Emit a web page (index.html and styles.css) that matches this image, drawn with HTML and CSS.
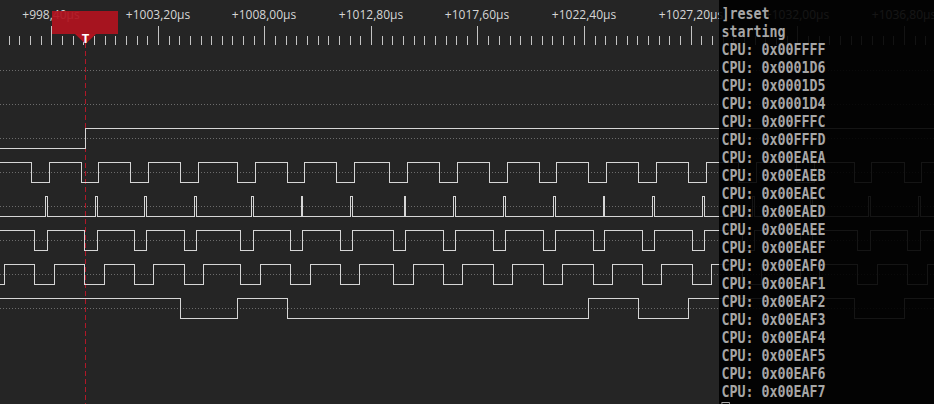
FILE: index.html
```html
<!DOCTYPE html>
<html>
<head>
<meta charset="utf-8">
<link rel="stylesheet" href="styles.css">
</head>
<body>
<div class="app">
  <div class="view">
    <svg class="ruler" width="934" height="46" viewBox="0 0 934 46">
      <g class="labels">
        <text x="51" y="19">+998,40µs</text>
        <text x="158" y="19">+1003,20µs</text>
        <text x="264" y="19">+1008,00µs</text>
        <text x="371" y="19">+1012,80µs</text>
        <text x="477" y="19">+1017,60µs</text>
        <text x="584" y="19">+1022,40µs</text>
        <text x="691" y="19">+1027,20µs</text>
        <text x="797" y="19">+1032,00µs</text>
        <text x="904" y="19">+1036,80µs</text>
      </g>
      <path class="ticks" d="M9.5 36V45M19.5 36V45M30.5 36V45M41.5 36V45M62.5 36V45M73.5 36V45M83.5 36V45M94.5 36V45M105.5 36V45M115.5 36V45M126.5 36V45M137.5 36V45M147.5 36V45M169.5 36V45M179.5 36V45M190.5 36V45M201.5 36V45M211.5 36V45M222.5 36V45M232.5 36V45M243.5 36V45M254.5 36V45M275.5 36V45M286.5 36V45M296.5 36V45M307.5 36V45M318.5 36V45M328.5 36V45M339.5 36V45M350.5 36V45M360.5 36V45M382.5 36V45M392.5 36V45M403.5 36V45M414.5 36V45M424.5 36V45M435.5 36V45M446.5 36V45M456.5 36V45M467.5 36V45M488.5 36V45M499.5 36V45M510.5 36V45M520.5 36V45M531.5 36V45M542.5 36V45M552.5 36V45M563.5 36V45M574.5 36V45M595.5 36V45M605.5 36V45M616.5 36V45M627.5 36V45M637.5 36V45M648.5 36V45M659.5 36V45M669.5 36V45M680.5 36V45M701.5 36V45M712.5 36V45M723.5 36V45M733.5 36V45M744.5 36V45M755.5 36V45M765.5 36V45M776.5 36V45M787.5 36V45M808.5 36V45M819.5 36V45M829.5 36V45M840.5 36V45M851.5 36V45M861.5 36V45M872.5 36V45M883.5 36V45M893.5 36V45M915.5 36V45M925.5 36V45M51.5 26V45M158.5 26V45M264.5 26V45M371.5 26V45M477.5 26V45M584.5 26V45M691.5 26V45M797.5 26V45M904.5 26V45"/>
      <line class="trigger-line" x1="85.5" y1="43" x2="85.5" y2="46"/>
      <rect class="marker-box" x="52" y="11" width="66" height="23"/>
      <polygon class="marker-tip" points="75,34 96,34 85.5,44"/>
      <text class="marker-t" x="85.5" y="43">T</text>
    </svg>
    <svg class="waves" width="934" height="358" viewBox="0 46 934 358">
      <path class="dots" d="M0 70.5H934M0 104.5H934M0 138.5H934M0 172.5H934M0 206.5H934M0 240.5H934M0 274.5H934M0 308.5H934"/>
      <line class="trigger-line" x1="85.5" y1="43" x2="85.5" y2="404"/>
      <path class="sig" d="M0 148.5H85.5V128.5H934"/>
      <path class="sig" d="M0 162.5H31.5V182.5H49.5V162.5H81.5V182.5H98.5V162.5H130.5V182.5H148.5V162.5H180.5V182.5H198.5V162.5H237.5V182.5H255.5V162.5H287.5V182.5H304.5V162.5H336.5V182.5H354.5V162.5H389.5V182.5H407.5V162.5H439.5V182.5H457.5V162.5H489.5V182.5H507.5V162.5H539.5V182.5H556.5V162.5H588.5V182.5H606.5V162.5H638.5V182.5H656.5V162.5H688.5V182.5H706.5V162.5H738.5V182.5H756.5V162.5H796.5V182.5H814.5V162.5H854.5V182.5H871.5V162.5H904.5V182.5H921.5V162.5H934"/>
      <path class="sig" d="M0 216.5H45.5V196.5H47.5V216.5H95.5V196.5H97.5V216.5H144.5V196.5H146.5V216.5H194.5V196.5H196.5V216.5H251.5V196.5H253.5V216.5H301.5V196.5H302.5V216.5H350.5V196.5H352.5V216.5H404.5V196.5H405.5V216.5H453.5V196.5H455.5V216.5H503.5V196.5H505.5V216.5H553.5V196.5H555.5V216.5H603.5V196.5H604.5V216.5H652.5V196.5H654.5V216.5H702.5V196.5H704.5V216.5H752.5V196.5H754.5V216.5H810.5V196.5H812.5V216.5H868.5V196.5H870.5V216.5H918.5V196.5H920.5V216.5H934"/>
      <path class="sig" d="M0 230.5H34.5V250.5H47.5V230.5H84.5V250.5H97.5V230.5H134.5V250.5H146.5V230.5H184.5V250.5H196.5V230.5H240.5V250.5H253.5V230.5H290.5V250.5H302.5V230.5H340.5V250.5H352.5V230.5H393.5V250.5H405.5V230.5H443.5V250.5H455.5V230.5H493.5V250.5H505.5V230.5H543.5V250.5H555.5V230.5H593.5V250.5H604.5V230.5H642.5V250.5H654.5V230.5H692.5V250.5H704.5V230.5H742.5V250.5H754.5V230.5H800.5V250.5H812.5V230.5H857.5V250.5H870.5V230.5H907.5V250.5H920.5V230.5H934"/>
      <path class="sig" d="M0 284.5H4.5V264.5H34.5V284.5H54.5V264.5H84.5V284.5H104.5V264.5H134.5V284.5H153.5V264.5H184.5V284.5H203.5V264.5H240.5V284.5H260.5V264.5H290.5V284.5H310.5V264.5H340.5V284.5H359.5V264.5H393.5V284.5H413.5V264.5H443.5V284.5H462.5V264.5H493.5V284.5H512.5V264.5H543.5V284.5H562.5V264.5H593.5V284.5H612.5V264.5H642.5V284.5H661.5V264.5H692.5V284.5H711.5V264.5H742.5V284.5H761.5V264.5H800.5V284.5H819.5V264.5H857.5V284.5H877.5V264.5H907.5V284.5H927.5V264.5H934"/>
      <path class="sig" d="M0 298.5H180.5V318.5H237.5V298.5H287.5V318.5H588.5V298.5H638.5V318.5H688.5V298.5H854.5V318.5H904.5V298.5H934"/>
    </svg>
  </div>
  <div class="terminal">
    <div class="term-text">
      <div class="line">]reset</div>
      <div class="line">starting</div>
      <div class="line">CPU: 0x00FFFF</div>
      <div class="line">CPU: 0x0001D6</div>
      <div class="line">CPU: 0x0001D5</div>
      <div class="line">CPU: 0x0001D4</div>
      <div class="line">CPU: 0x00FFFC</div>
      <div class="line">CPU: 0x00FFFD</div>
      <div class="line">CPU: 0x00EAEA</div>
      <div class="line">CPU: 0x00EAEB</div>
      <div class="line">CPU: 0x00EAEC</div>
      <div class="line">CPU: 0x00EAED</div>
      <div class="line">CPU: 0x00EAEE</div>
      <div class="line">CPU: 0x00EAEF</div>
      <div class="line">CPU: 0x00EAF0</div>
      <div class="line">CPU: 0x00EAF1</div>
      <div class="line">CPU: 0x00EAF2</div>
      <div class="line">CPU: 0x00EAF3</div>
      <div class="line">CPU: 0x00EAF4</div>
      <div class="line">CPU: 0x00EAF5</div>
      <div class="line">CPU: 0x00EAF6</div>
      <div class="line">CPU: 0x00EAF7</div>
      <div class="line"><span class="cursor"></span></div>
    </div>
  </div>
</div>
</body>
</html>
```
FILE: styles.css
```css
html, body {
  margin: 0;
  padding: 0;
  background: #252525;
}
.app {
  position: relative;
  width: 934px;
  height: 404px;
  overflow: hidden;
  background: #252525;
}
.view {
  display: flex;
  flex-direction: column;
}
.ruler, .waves {
  display: block;
}
.labels text {
  font-family: "Open Sans", "Noto Sans", sans-serif;
  font-size: 12px;
  fill: #d6d6d6;
  text-anchor: middle;
}
.ticks {
  stroke: #c4c4c4;
  stroke-width: 1;
  fill: none;
  shape-rendering: crispEdges;
}
.marker-box {
  fill: #b0131f;
  opacity: 0.93;
}
.marker-tip {
  fill: #b0131f;
}
.marker-t {
  font-family: "Open Sans", "Noto Sans", sans-serif;
  font-weight: 700;
  font-size: 13px;
  fill: #ffffff;
  text-anchor: middle;
}
.trigger-line {
  stroke: #b01828;
  stroke-width: 1;
  stroke-dasharray: 5 3;
  shape-rendering: crispEdges;
}
.dots {
  stroke: #6c6c6c;
  stroke-width: 1;
  stroke-dasharray: 1 2;
  fill: none;
  shape-rendering: crispEdges;
}
.sig {
  stroke: #d6d6d6;
  stroke-width: 1;
  fill: none;
  shape-rendering: crispEdges;
}
.terminal {
  position: absolute;
  left: 719px;
  top: 0;
  right: 0;
  bottom: 0;
  background: rgba(0, 0, 0, 0.9);
  overflow: hidden;
}
.term-text {
  padding: 5px 0 0 3px;
  font-family: "DejaVu Sans Mono", monospace;
  font-weight: 700;
  font-size: 16px;
  line-height: 18px;
  color: #a6a6a6;
  transform: scaleX(0.8307);
  transform-origin: 0 0;
}
.line {
  height: 18px;
  white-space: pre;
}
.cursor {
  display: inline-block;
  width: 9.6px;
  height: 14px;
  margin-top: 1px;
  border: 1px solid #a6a6a6;
  box-sizing: border-box;
  vertical-align: top;
}
```
